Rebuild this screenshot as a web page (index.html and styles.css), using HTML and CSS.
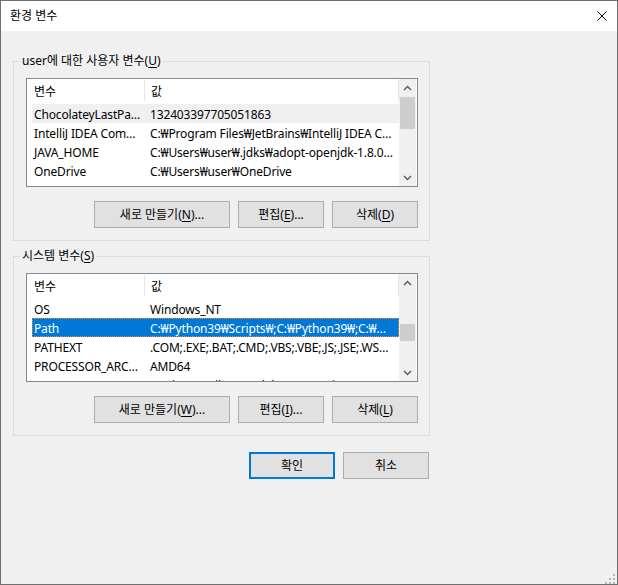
FILE: index.html
```html
<!DOCTYPE html>
<html lang="ko">
<head>
<meta charset="utf-8">
<title>환경 변수</title>
<link rel="stylesheet" href="styles.css">
</head>
<body>
<div class="window">
  <div class="titlebar">
    <span class="title">환경 변수</span>
    <span class="close">
      <svg width="10" height="10" viewBox="0 0 10 10"><path d="M0.5 0.5L9.5 9.5M9.5 0.5L0.5 9.5" stroke="#000" stroke-width="1" fill="none"/></svg>
    </span>
  </div>
  <div class="content">
    <fieldset class="group">
      <legend>user에 대한 사용자 변수(<u>U</u>)</legend>
      <div class="group-body">
        <div class="list">
          <div class="list-main">
            <div class="header"><span class="hcol1">변수</span><span class="hcol2">값</span></div>
            <div class="row inactive"><span class="c1">ChocolateyLastPathUpdate</span><span class="c2">132403397705051863</span></div>
            <div class="row"><span class="c1">IntelliJ IDEA Community Edition</span><span class="c2">C:₩Program Files₩JetBrains₩IntelliJ IDEA Community Edition 2020.3₩bin;</span></div>
            <div class="row"><span class="c1">JAVA_HOME</span><span class="c2">C:₩Users₩user₩.jdks₩adopt-openjdk-1.8.0_275</span></div>
            <div class="row"><span class="c1">OneDrive</span><span class="c2">C:₩Users₩user₩OneDrive</span></div>
          </div>
          <div class="scrollbar">
            <div class="arrow"><svg width="9" height="6" viewBox="0 0 9 6"><path d="M1 5L4.5 1.5L8 5" stroke="#606060" stroke-width="1.5" fill="none"/></svg></div>
            <div class="track"><div class="thumb" style="margin-top:1px;height:32px"></div></div>
            <div class="arrow"><svg width="9" height="6" viewBox="0 0 9 6"><path d="M1 1L4.5 4.5L8 1" stroke="#606060" stroke-width="1.5" fill="none"/></svg></div>
          </div>
        </div>
        <div class="buttons">
          <button class="btn btn-new">새로 만들기(<u>N</u>)...</button>
          <button class="btn btn-small">편집(<u>E</u>)...</button>
          <button class="btn btn-small">삭제(<u>D</u>)</button>
        </div>
      </div>
    </fieldset>

    <fieldset class="group group-second">
      <legend>시스템 변수(<u>S</u>)</legend>
      <div class="group-body">
        <div class="list">
          <div class="list-main">
            <div class="header"><span class="hcol1">변수</span><span class="hcol2">값</span></div>
            <div class="row"><span class="c1">OS</span><span class="c2">Windows_NT</span></div>
            <div class="row selected"><span class="c1">Path</span><span class="c2">C:₩Python39₩Scripts₩;C:₩Python39₩;C:₩Windows₩system32;C:₩Windows</span></div>
            <div class="row"><span class="c1">PATHEXT</span><span class="c2">.COM;.EXE;.BAT;.CMD;.VBS;.VBE;.JS;.JSE;.WSF;.WSH;.MSC</span></div>
            <div class="row"><span class="c1">PROCESSOR_ARCHITECTURE</span><span class="c2">AMD64</span></div>
            <div class="row"><span class="c1">PROCESSOR_IDENTIFIER</span><span class="c2">Intel64 Family 6 Model 158 Stepping 10, GenuineIntel</span></div>
          </div>
          <div class="scrollbar">
            <div class="arrow"><svg width="9" height="6" viewBox="0 0 9 6"><path d="M1 5L4.5 1.5L8 5" stroke="#606060" stroke-width="1.5" fill="none"/></svg></div>
            <div class="track"><div class="thumb" style="margin-top:33px;height:17px"></div></div>
            <div class="arrow"><svg width="9" height="6" viewBox="0 0 9 6"><path d="M1 1L4.5 4.5L8 1" stroke="#606060" stroke-width="1.5" fill="none"/></svg></div>
          </div>
        </div>
        <div class="buttons">
          <button class="btn btn-new">새로 만들기(<u>W</u>)...</button>
          <button class="btn btn-small">편집(<u>I</u>)...</button>
          <button class="btn btn-small">삭제(<u>L</u>)</button>
        </div>
      </div>
    </fieldset>

    <div class="footer">
      <button class="btn btn-small btn-default">확인</button>
      <button class="btn btn-small">취소</button>
    </div>
  </div>
  <div class="grip">
    <svg width="12" height="12" viewBox="0 0 12 12">
      <rect x="9" y="1" width="2" height="2" fill="#b4b4b4"/>
      <rect x="5" y="5" width="2" height="2" fill="#b4b4b4"/>
      <rect x="9" y="5" width="2" height="2" fill="#b4b4b4"/>
      <rect x="1" y="9" width="2" height="2" fill="#b4b4b4"/>
      <rect x="5" y="9" width="2" height="2" fill="#b4b4b4"/>
      <rect x="9" y="9" width="2" height="2" fill="#b4b4b4"/>
    </svg>
  </div>
</div>
</body>
</html>
```

FILE: styles.css
```css
html, body {
  margin: 0;
  padding: 0;
  background: #f0f0f0;
}

body {
  font-family: "Noto Sans", "Noto Sans CJK KR", sans-serif;
  font-size: 12px;
  color: #000;
}

.window {
  position: relative;
  box-sizing: border-box;
  width: 618px;
  height: 585px;
  border: 1px solid #707070;
  background: #f0f0f0;
  display: flex;
  flex-direction: column;
}

.titlebar {
  height: 30px;
  background: #fff;
  display: flex;
  align-items: center;
  justify-content: space-between;
  padding: 0 10px 0 9px;
  flex: none;
}

.title {
  line-height: 16px;
  margin-top: -1px;
}

.close {
  display: flex;
  margin-top: -1px;
}

.content {
  padding: 22px 0 0 12px;
  width: 417px;
}

.group {
  margin: 0;
  padding: 0;
  border: 1px solid #dcdcdc;
  width: 417px;
  box-sizing: border-box;
  min-width: 0;
}

.group-second {
  margin-top: 7px;
}

.group legend {
  margin-left: 6px;
  padding: 0 2px;
  line-height: 16px;
  height: 16px;
}

u {
  text-decoration: underline;
  text-underline-offset: 2px;
}

.group-body {
  padding: 9px 11px 12px 12px;
}

.list {
  box-sizing: border-box;
  width: 392px;
  height: 109px;
  border: 1px solid #828790;
  background: #fff;
  display: flex;
  overflow: hidden;
}

.list-main {
  width: 372px;
  flex: none;
  overflow: hidden;
}

.header {
  height: 25px;
  display: flex;
  align-items: stretch;
}

.hcol1 {
  width: 110px;
  padding-left: 7px;
  border-right: 1px solid #e5e5e5;
  display: flex;
  align-items: center;
  margin: 1px 0 3px;
}

.hcol2 {
  flex: 1;
  padding-left: 6px;
  border-right: 1px solid #e5e5e5;
  display: flex;
  align-items: center;
  margin: 1px 0 3px;
}

.row {
  box-sizing: border-box;
  height: 19px;
  margin-left: 5px;
  width: 367px;
  display: flex;
  align-items: flex-start;
  padding-top: 2px;
}

.row.inactive {
  background: #f0f0f0;
}

.row.selected {
  background: #0078d7;
  color: #fff;
  outline: 1px dotted #f08a24;
  outline-offset: -1px;
}

.c1,
.c2 {
  box-sizing: border-box;
  line-height: 17px;
  white-space: nowrap;
  overflow: hidden;
  text-overflow: ellipsis;
  letter-spacing: -0.15px;
}

.c1 {
  width: 111px;
  flex: none;
  padding: 0 1px 0 2px;
}

.c2 {
  flex: 1;
  min-width: 0;
  padding: 0 5px 0 7px;
}

.scrollbar {
  width: 17px;
  flex: none;
  background: #f0f0f0;
  display: flex;
  flex-direction: column;
}

.arrow {
  height: 17px;
  flex: none;
  display: flex;
  align-items: center;
  justify-content: center;
}

.track {
  flex: 1;
  padding: 0 1px;
}

.thumb {
  background: #cdcdcd;
}

.buttons {
  display: flex;
  justify-content: flex-end;
  gap: 8px;
  margin-top: 14px;
}

.btn {
  box-sizing: border-box;
  height: 27px;
  border: 1px solid #adadad;
  background: #e1e1e1;
  font: inherit;
  color: #000;
  padding: 0;
  margin: 0;
  display: flex;
  align-items: center;
  justify-content: center;
  line-height: 16px;
  border-radius: 0;
}

.btn-new {
  width: 136px;
}

.btn-small {
  width: 86px;
}

.btn-default {
  border: 2px solid #0078d7;
}

.footer {
  display: flex;
  justify-content: flex-end;
  gap: 8px;
  margin-top: 16px;
  padding-right: 1px;
}

.grip {
  position: absolute;
  right: 1px;
  bottom: 0;
  width: 12px;
  height: 12px;
}
```
